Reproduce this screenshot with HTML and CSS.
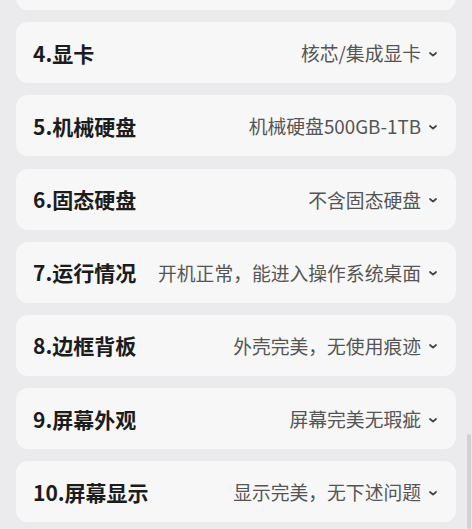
FILE: index.html
```
<!DOCTYPE html>
<html lang="zh-CN">
<head>
<meta charset="utf-8">
<link rel="stylesheet" href="styles.css">
</head>
<body>
<div class="list">
  <div class="card card-partial"></div>
  <div class="card"><span class="title">4.显卡</span><span class="value">核芯/集成显卡<svg class="chev" viewBox="0 0 8 5"><path d="M1 1l3 2.6L7 1"/></svg></span></div>
  <div class="card"><span class="title">5.机械硬盘</span><span class="value">机械硬盘500GB-1TB<svg class="chev" viewBox="0 0 8 5"><path d="M1 1l3 2.6L7 1"/></svg></span></div>
  <div class="card"><span class="title">6.固态硬盘</span><span class="value">不含固态硬盘<svg class="chev" viewBox="0 0 8 5"><path d="M1 1l3 2.6L7 1"/></svg></span></div>
  <div class="card"><span class="title">7.运行情况</span><span class="value">开机正常，能进入操作系统桌面<svg class="chev" viewBox="0 0 8 5"><path d="M1 1l3 2.6L7 1"/></svg></span></div>
  <div class="card"><span class="title">8.边框背板</span><span class="value">外壳完美，无使用痕迹<svg class="chev" viewBox="0 0 8 5"><path d="M1 1l3 2.6L7 1"/></svg></span></div>
  <div class="card"><span class="title">9.屏幕外观</span><span class="value">屏幕完美无瑕疵<svg class="chev" viewBox="0 0 8 5"><path d="M1 1l3 2.6L7 1"/></svg></span></div>
  <div class="card"><span class="title">10.屏幕显示</span><span class="value">显示完美，无下述问题<svg class="chev" viewBox="0 0 8 5"><path d="M1 1l3 2.6L7 1"/></svg></span></div>
</div>
<div class="scrollbar"></div>
</body>
</html>
```

FILE: styles.css
```
html, body {
  margin: 0;
  padding: 0;
  background: #ebebed;
  height: 529px;
  overflow: hidden;
  font-family: "Noto Sans CJK SC", "Noto Sans", sans-serif;
}
.list {
  display: flex;
  flex-direction: column;
  gap: 12.2px;
  padding: 0 16px;
}
.card {
  flex: none;
  height: 61px;
  background: #f7f7f7;
  border-radius: 12px;
  display: flex;
  align-items: center;
  justify-content: space-between;
  padding: 0 19px 0 17px;
  box-sizing: border-box;
}
.card-partial {
  margin-top: -51px;
}
.title {
  font-size: 21px;
  font-weight: 700;
  color: #1c1c1c;
  white-space: nowrap;
}
.value {
  display: flex;
  align-items: center;
  gap: 8px;
  font-size: 18.8px;
  color: #555;
  white-space: nowrap;
}
.chev {
  width: 8px;
  height: 5px;
  margin-top: 3px;
  fill: none;
  stroke: #444;
  stroke-width: 1.8;
  stroke-linecap: round;
  stroke-linejoin: round;
}
.scrollbar {
  position: absolute;
  left: 467px;
  top: 434px;
  width: 4px;
  height: 95px;
  background: #d2d2d4;
  border-radius: 2px;
}
```
